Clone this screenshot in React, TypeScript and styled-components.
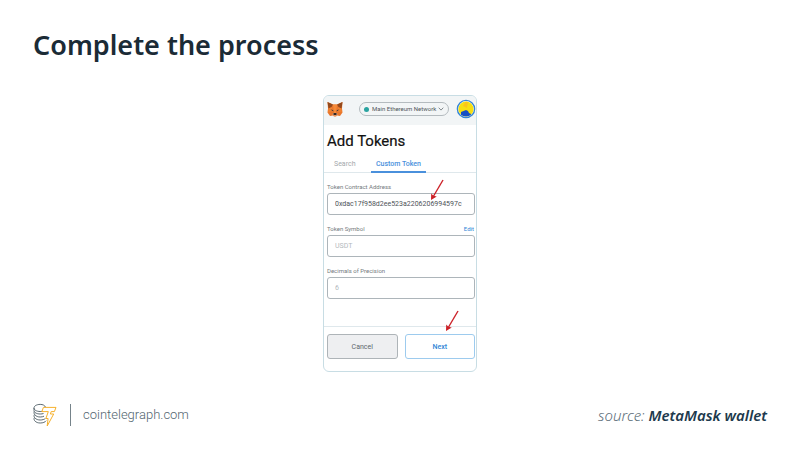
import React from "react";
import styled, { createGlobalStyle } from "styled-components";

const GlobalStyle = createGlobalStyle`
  * { box-sizing: border-box; }
  body { margin: 0; background: #fff; }
  button, input, select { font-family: Roboto, sans-serif; margin: 0; }
`;

const Page = styled.main`
  min-height: 100vh;
  display: flex;
  flex-direction: column;
  padding: 27px 33px 31px;
  font-family: "Noto Sans", "Open Sans", sans-serif;
`;

const Title = styled.h1`
  margin: 0;
  font-size: 27px;
  line-height: 36px;
  font-weight: 600;
  color: #1b2b36;
`;

const Stage = styled.section`
  flex: 1;
  display: flex;
  justify-content: center;
  align-items: flex-start;
  padding: 32px 0 16px;
`;

const Wallet = styled.div`
  width: 154px;
  border: 1px solid #c8dde4;
  border-radius: 6px;
  background: #fff;
  font-family: Roboto, sans-serif;
  overflow: hidden;
`;

const WalletHeader = styled.header`
  display: flex;
  align-items: center;
  justify-content: space-between;
  height: 29px;
  padding: 0 0 3px 3px;
  background: #f2f5f6;
`;

const NetworkPill = styled.label`
  display: flex;
  align-items: center;
  width: 90px;
  height: 14px;
  margin-left: 9px;
  padding: 0 4px;
  border: 1px solid #b4bbbf;
  border-radius: 7px;
`;

const NetworkDot = styled.span`
  width: 5px;
  height: 5px;
  border-radius: 50%;
  background: #29a3a0;
`;

const NetworkSelect = styled.select`
  appearance: none;
  flex: 1;
  min-width: 0;
  padding: 0 0 0 3px;
  border: 0;
  background: transparent;
  color: #50565b;
  font-size: 6px;
  line-height: 10px;
`;

const Heading = styled.h2`
  margin: 0;
  padding: 7px 3px 0;
  font-size: 15px;
  line-height: 18px;
  font-weight: 400;
  color: #111;
  -webkit-text-stroke: 0.2px #111;
`;

const Tabs = styled.div`
  display: flex;
  height: 23px;
  padding-top: 7px;
  padding-left: 3px;
  border-bottom: 1px solid #dfe8ec;
`;

const Tab = styled.button<{ $active?: boolean }>`
  height: 16px;
  width: ${(p) => (p.$active ? "55px" : "44px")};
  padding: 0 0 1px ${(p) => (p.$active ? "0" : "7px")};
  border: 0;
  border-bottom: 2px solid ${(p) => (p.$active ? "#4a90dc" : "transparent")};
  background: none;
  color: ${(p) => (p.$active ? "#4a90dc" : "#a3a8ac")};
  font-size: 7px;
  line-height: 10px;
  font-weight: ${(p) => (p.$active ? 500 : 400)};
  text-align: ${(p) => (p.$active ? "center" : "left")};
  white-space: nowrap;
`;

const Form = styled.form`
  display: flex;
  flex-direction: column;
  gap: 10px;
  padding: 10px 1px 27px 3px;
`;

const Field = styled.div`
  display: grid;
  grid-template-columns: 1fr auto;
  row-gap: 2px;
`;

const FieldLabel = styled.label`
  font-size: 6px;
  line-height: 8px;
  color: #747b80;
`;

const EditLink = styled.a`
  padding-right: 1px;
  font-size: 6px;
  line-height: 8px;
  color: #2f86d6;
  text-decoration: none;
`;

const TextInput = styled.input`
  grid-column: 1 / -1;
  width: 100%;
  height: 22px;
  padding: 0 6px 0 7px;
  border: 1px solid #adb5ba;
  border-radius: 3px;
  background: #fff;
  color: #4d5257;
  font-size: 7px;
  &::placeholder { color: #b3b9bd; opacity: 1; }
`;

const Actions = styled.div`
  display: grid;
  grid-template-columns: 1fr 1fr;
  gap: 7px;
  padding: 7px 1px 12px 3px;
  border-top: 1px solid #dfe8ec;
`;

const ActionButton = styled.button<{ $primary?: boolean }>`
  height: 25px;
  padding: 0;
  border: 1px solid ${(p) => (p.$primary ? "#9dcbee" : "#aeb4b8")};
  border-radius: 3px;
  background: ${(p) => (p.$primary ? "#fff" : "#eeeff1")};
  color: ${(p) => (p.$primary ? "#2f86d6" : "#60676c")};
  font-size: 7px;
  font-weight: ${(p) => (p.$primary ? 500 : 400)};
`;

const Anchor = styled.div`
  position: relative;
`;

const Pointer = styled.svg<{ $right: number; $bottom: number }>`
  position: absolute;
  right: ${(p) => p.$right}px;
  bottom: ${(p) => p.$bottom}px;
  pointer-events: none;
`;

const Footer = styled.footer`
  display: flex;
  align-items: center;
  justify-content: space-between;
  height: 28px;
`;

const Brand = styled.div`
  display: flex;
  align-items: center;
`;

const Rule = styled.span`
  width: 1px;
  height: 22px;
  margin: 0 12px 0 13px;
  background: #75838a;
`;

const SiteLink = styled.a`
  font-family: Roboto, sans-serif;
  font-weight: 300;
  font-size: 13px;
  line-height: 20px;
  color: #52656f;
  text-decoration: none;
`;

const Source = styled.p`
  margin: 0;
  font-size: 15px;
  line-height: 20px;
  font-style: italic;
  font-weight: 300;
  color: #5b6d78;
  strong { font-weight: 600; color: #1d3a4d; }
`;

const FoxIcon = () => (
  <svg width="16" height="16" viewBox="0 0 32 32" aria-label="MetaMask" role="img">
    <path d="M1 2 12 7h8l11-5-1 13 1 8-5 7-6-1-2 2h-4l-2-2-6 1-5-7 1-8z" fill="#e8762c" />
    <path d="m1 2 11 5-3 5-6 3zM31 2 20 7l3 5 6 3z" fill="#94491c" />
    <path d="m12 7 2 17h4l2-17z" fill="#f58a38" />
    <path d="m3 15 6-2 4 7-11 3zM29 15l-6-2-4 7 11 3z" fill="#f0812f" />
    <path d="m7 17 5 1 1 3zM25 17l-5 1-1 3z" fill="#30323a" />
    <path d="m11 26 2-2h6l2 2-2 3h-6z" fill="#d7b49b" />
    <path d="m13 25 1-1h4l1 1v3h-6z" fill="#34251f" />
  </svg>
);

const Avatar = () => (
  <svg width="20" height="20" viewBox="0 0 20 20" role="img" aria-label="Account">
    <defs><clipPath id="face"><circle cx="10" cy="10" r="7.6" /></clipPath></defs>
    <circle cx="10" cy="10" r="8.6" fill="#fff" stroke="#3486d6" strokeWidth="1.4" />
    <g clipPath="url(#face)">
      <path fill="#f6df12" d="M0 0h20v20H0z" />
      <path fill="#fac51c" d="M10 2 7 7l4 2 1-6z" />
      <path fill="#174fc5" d="m5 13 5-2 2 1 1 2 2 1-1 4H5z" />
    </g>
  </svg>
);

const Chevron = () => (
  <svg width="6" height="4" viewBox="0 0 6 4" fill="none" stroke="#666d72" strokeWidth="0.8" aria-hidden="true">
    <path d="m.7.7 2.3 2.4L5.3.7" />
  </svg>
);

const CoinLogo = () => (
  <svg width="24" height="24" viewBox="0 0 24 24" fill="none" role="img" aria-label="Cointelegraph">
    <g stroke="#4b5a62" strokeWidth="0.9">
      <path d="M12.500 4.200C11.800 2.300 9.800 1.400 7.200 1.400 3.600 1.400 1 3 1 5s2.600 3.500 6.200 3.500c.7 0 1.300 0 1.900-.2" />
      <path d="M1 5v2.500c0 2 2.600 3.500 6.200 3.500 1.300 0 2.400-.2 3.300-.5" />
      <path d="M1.300 8.500C.2 11 2.800 14 7.200 14c1.500 0 2.800-.3 3.800-.8" />
      <path d="M1.300 11.700C.2 14.200 2.800 17 7.200 17c2.200 0 4-.6 5.200-1.500" />
      <path d="M1.300 14.700C.2 17.200 2.800 20 7.200 20c2.800 0 5-.9 6-2.300" />
    </g>
    <path d="M10.400 4.400H23l-1.600 4.200h-3.200l-.8 2.400h3.300L14.200 23l.9-7.500h-2.200l2.400-6.900H8.900z" stroke="#f6b12d" strokeWidth="1" />
  </svg>
);

const Arrow = ({ right, bottom }: { right: number; bottom: number }) => (
  <Pointer $right={right} $bottom={bottom} width="14" height="22" viewBox="0 0 14 22" fill="none" aria-hidden="true">
    <path d="M13 1 3 18" stroke="#cc2128" strokeWidth="1.4" />
    <path d="m1 21 .2-6.500 2.200 2.300 3.400.6z" fill="#cc2128" />
  </Pointer>
);

export default function App() {
  return (
    <Page>
      <GlobalStyle />
      <Title>Complete the process</Title>
      <Stage>
        <Wallet>
          <WalletHeader>
            <FoxIcon />
            <NetworkPill>
              <NetworkDot />
              <NetworkSelect aria-label="Network">
                <option>Main Ethereum Network</option>
              </NetworkSelect>
              <Chevron />
            </NetworkPill>
            <Avatar />
          </WalletHeader>
          <Heading>Add Tokens</Heading>
          <Tabs role="tablist">
            <Tab type="button" role="tab" aria-selected={false}>Search</Tab>
            <Tab type="button" role="tab" aria-selected $active>Custom Token</Tab>
          </Tabs>
          <Form id="token-form" onSubmit={(e) => e.preventDefault()}>
            <Anchor>
              <Field>
                <FieldLabel htmlFor="address">Token Contract Address</FieldLabel>
                <TextInput id="address" defaultValue="0xdac17f958d2ee523a2206206994597c" />
              </Field>
              <Arrow right={31} bottom={14} />
            </Anchor>
            <Field>
              <FieldLabel htmlFor="symbol">Token Symbol</FieldLabel>
              <EditLink href="#symbol">Edit</EditLink>
              <TextInput id="symbol" placeholder="USDT" />
            </Field>
            <Field>
              <FieldLabel htmlFor="decimals">Decimals of Precision</FieldLabel>
              <TextInput id="decimals" placeholder="6" />
            </Field>
          </Form>
          <Anchor>
            <Actions>
              <ActionButton type="button">Cancel</ActionButton>
              <ActionButton type="submit" form="token-form" $primary>Next</ActionButton>
            </Actions>
            <Arrow right={17} bottom={39} />
          </Anchor>
        </Wallet>
      </Stage>
      <Footer>
        <Brand>
          <CoinLogo />
          <Rule />
          <SiteLink href="#cointelegraph">cointelegraph.com</SiteLink>
        </Brand>
        <Source>source: <strong>MetaMask wallet</strong></Source>
      </Footer>
    </Page>
  );
}
